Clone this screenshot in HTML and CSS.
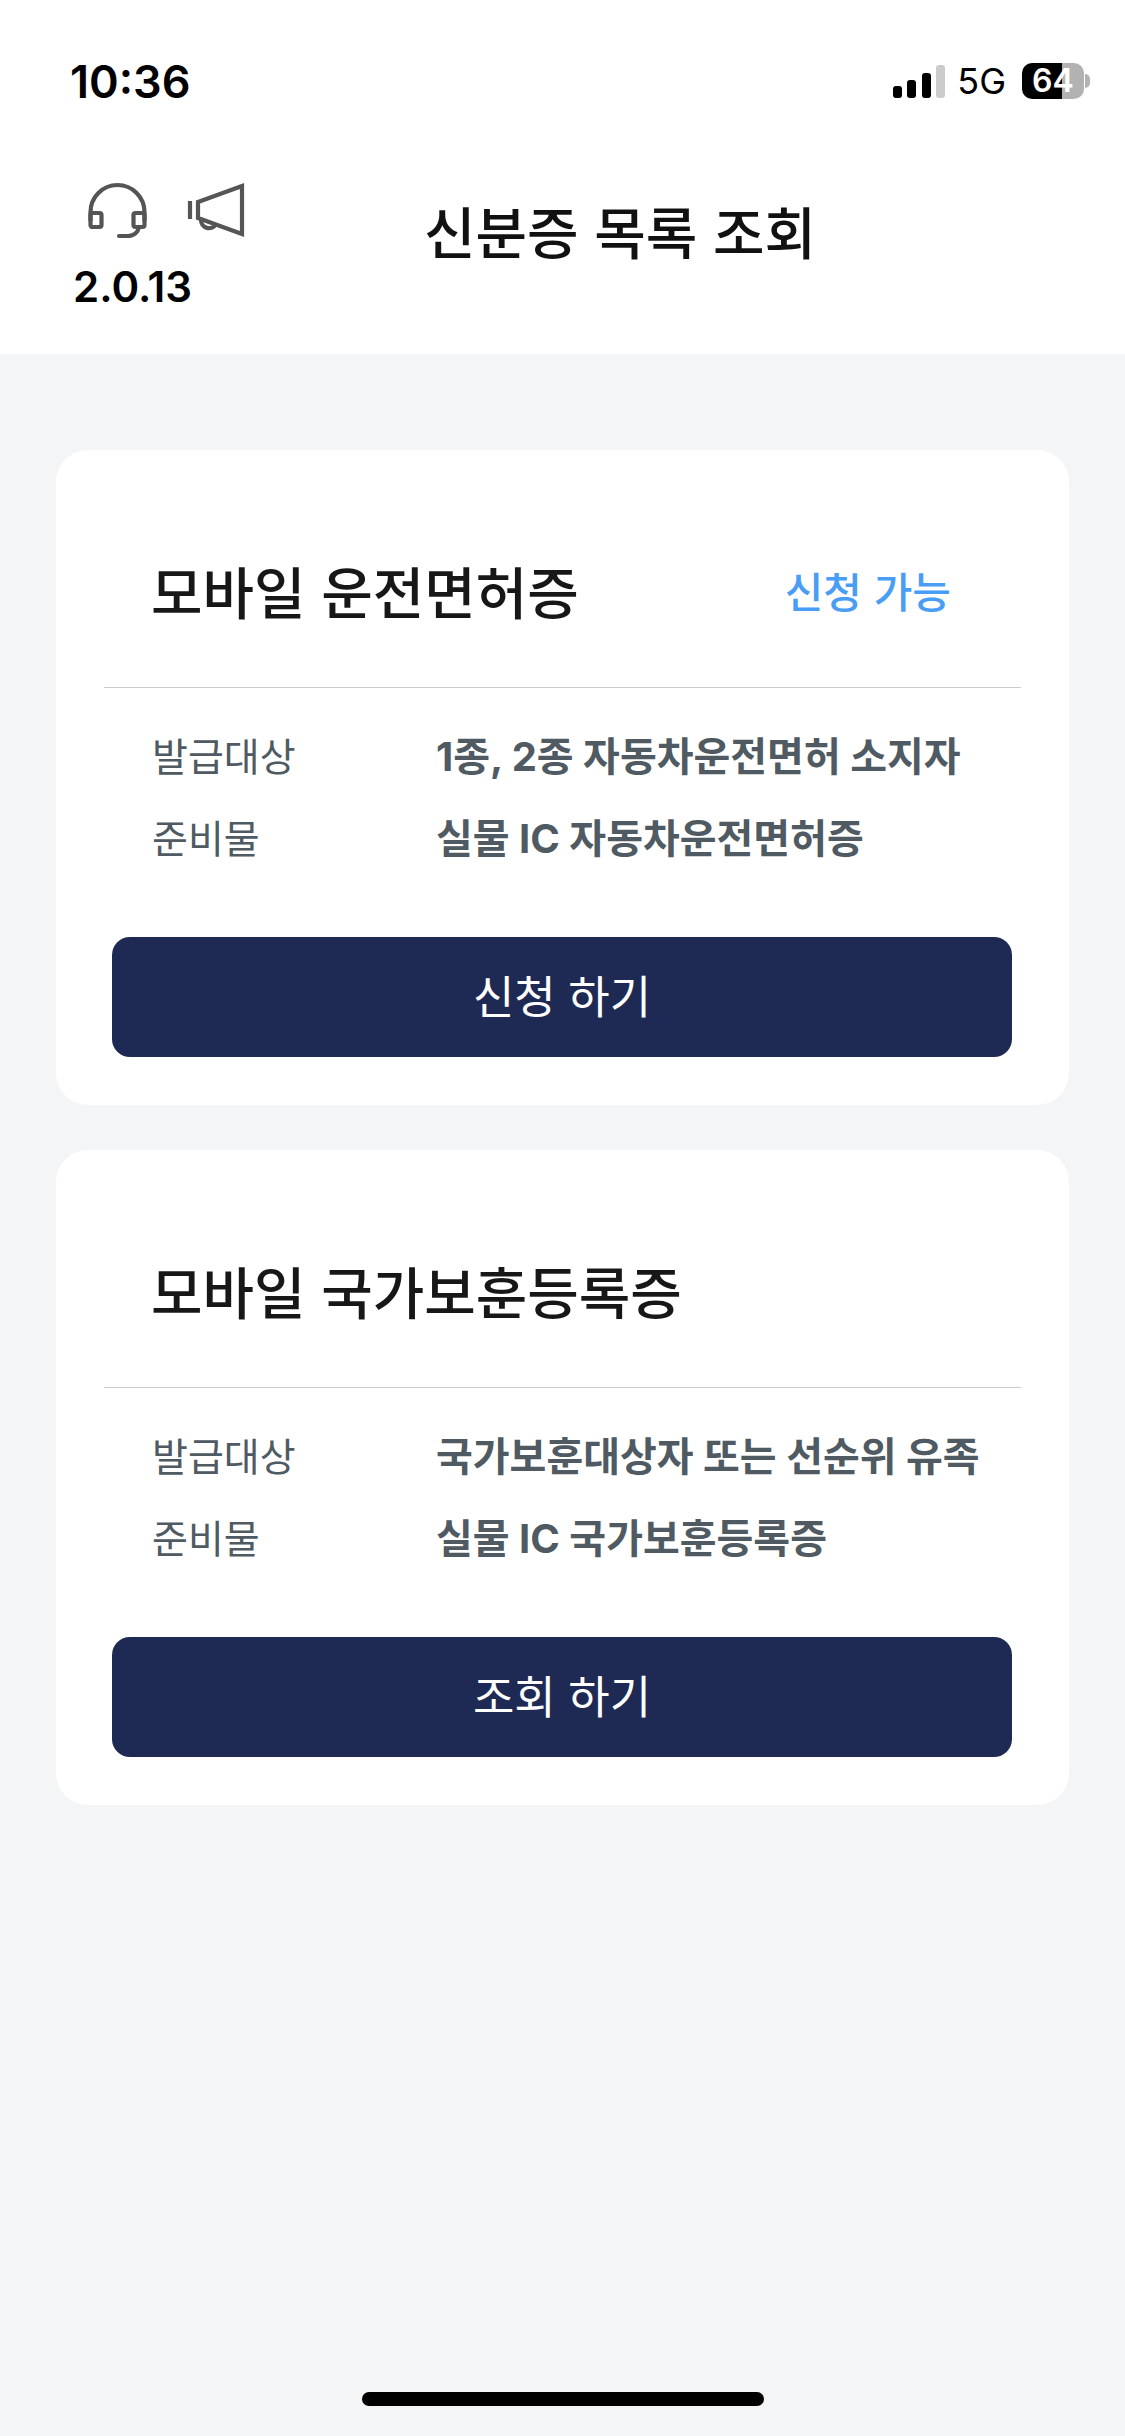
FILE: index.html
```html
<!DOCTYPE html>
<html lang="ko">
<head>
  <meta charset="utf-8">
  <title>신분증 목록 조회</title>
  <link rel="stylesheet" href="styles.css">
</head>
<body>
  <div class="top">
    <div class="status-bar">
      <span class="time">10:36</span>
      <div class="status-right">
        <svg class="signal" width="52" height="33" viewBox="0 0 52 33">
          <rect x="0" y="21" width="9" height="12" rx="3" fill="#000"/>
          <rect x="14" y="15" width="9" height="18" rx="3" fill="#000"/>
          <rect x="29" y="8" width="9" height="25" rx="3" fill="#000"/>
          <rect x="43" y="0" width="9" height="33" rx="3" fill="#ccc"/>
        </svg>
        <span class="network">5G</span>
        <div class="battery"><span class="battery-level">64</span><i class="battery-cap"></i></div>
      </div>
    </div>
    <div class="header">
      <div class="header-left">
        <div class="header-icons">
          <svg width="60" height="58" viewBox="0 0 60 58" fill="none" stroke="#555" stroke-width="4.2">
            <path d="M2.5 40V31a27 27 0 0 1 54 0v9"/>
            <rect x="2.5" y="32" width="11" height="14" rx="2"/>
            <rect x="45.5" y="32" width="11" height="14" rx="2"/>
            <path d="M51 46c-1 5-5 9-11 9h-9" stroke-linecap="round"/>
          </svg>
          <svg width="60" height="56" viewBox="0 0 60 56" fill="none" stroke="#555" stroke-width="4.2">
            <path d="M3 20v18"/>
            <path d="M11 21L55 5v48L11 37z"/>
            <path d="M14 39a8 8 0 0 0 15 4"/>
          </svg>
        </div>
        <span class="version">2.0.13</span>
      </div>
      <h1 class="page-title">신분증 목록 조회</h1>
    </div>
  </div>

  <div class="content">
    <div class="card">
      <div class="card-head">
        <h2 class="card-title">모바일 운전면허증</h2>
        <span class="card-state">신청 가능</span>
      </div>
      <dl class="info">
        <div class="info-row"><dt>발급대상</dt><dd>1종, 2종 자동차운전면허 소지자</dd></div>
        <div class="info-row"><dt>준비물</dt><dd>실물 IC 자동차운전면허증</dd></div>
      </dl>
      <button class="action">신청 하기</button>
    </div>

    <div class="card">
      <div class="card-head">
        <h2 class="card-title">모바일 국가보훈등록증</h2>
      </div>
      <dl class="info">
        <div class="info-row"><dt>발급대상</dt><dd>국가보훈대상자 또는 선순위 유족</dd></div>
        <div class="info-row"><dt>준비물</dt><dd>실물 IC 국가보훈등록증</dd></div>
      </dl>
      <button class="action">조회 하기</button>
    </div>
  </div>

  <div class="home-bar"><div class="home-indicator"></div></div>
</body>
</html>
```

FILE: styles.css
```css
* {
  box-sizing: border-box;
}

html, body {
  margin: 0;
  padding: 0;
}

body {
  width: 1125px;
  height: 2436px;
  display: flex;
  flex-direction: column;
  background-color: #f4f5f7;
  font-family: "Inter", "Noto Sans CJK KR", sans-serif;
}

.top {
  height: 354px;
  background-color: #fff;
}

.status-bar {
  height: 162px;
  display: flex;
  justify-content: space-between;
  align-items: center;
  padding: 0 35px 0 70px;
}

.time {
  font-size: 45px;
  font-weight: 600;
  color: #000;
}

.status-right {
  display: flex;
  align-items: center;
}

.network {
  font-size: 36px;
  margin-left: 12px;
  color: #000;
}

.battery {
  display: flex;
  align-items: center;
  margin-left: 16px;
}

.battery-level {
  width: 62px;
  height: 36px;
  border-radius: 10px;
  background: linear-gradient(to right, #000 64%, #b2b2b2 64%);
  color: #fff;
  font-size: 32px;
  font-weight: 600;
  line-height: 36px;
  text-align: center;
}

.battery-cap {
  width: 5px;
  height: 14px;
  margin-left: 1px;
  border-radius: 0 5px 5px 0;
  background-color: #b2b2b2;
}

.header {
  display: flex;
  align-items: flex-start;
  padding-left: 73px;
}

.header-left {
  width: 351px;
  margin-top: 19px;
}

.header-icons {
  display: flex;
  gap: 39px;
  padding-left: 15px;
}

.version {
  display: block;
  margin-top: 23px;
  font-size: 42px;
  font-weight: 600;
  color: #000;
  line-height: 50px;
}

.page-title {
  margin: 27px 0 0;
  font-family: "Noto Sans CJK KR", sans-serif;
  font-size: 56px;
  font-weight: 500;
  color: #111;
}

.content {
  flex: 1;
  display: flex;
  flex-direction: column;
  gap: 45px;
  padding: 96px 56px 0;
}

.card {
  height: 655px;
  padding: 0 48px;
  background-color: #fff;
  border-radius: 32px;
}

.card-head {
  height: 238px;
  display: flex;
  justify-content: space-between;
  align-items: center;
  padding: 42px 70px 0 47px;
  border-bottom: 1px solid #ccc;
}

.card-title {
  margin: 0;
  font-family: "Noto Sans CJK KR", sans-serif;
  font-size: 56px;
  font-weight: 500;
  color: #171717;
}

.card-state {
  font-family: "Noto Sans CJK KR", sans-serif;
  font-size: 42px;
  font-weight: 500;
  color: #4a9df5;
}

.info {
  margin: 0;
  padding: 25px 0 0 48px;
}

.info-row {
  height: 82px;
  display: flex;
  align-items: center;
  color: #4f5a62;
}

.info-row dt {
  width: 284px;
  font-size: 39px;
  font-weight: 400;
}

.info-row dd {
  margin: 0;
  font-size: 40px;
  font-weight: 700;
  white-space: nowrap;
}

.action {
  display: block;
  width: 900px;
  height: 120px;
  margin: 60px 0 0 8px;
  padding: 0 0 6px;
  border: 0;
  border-radius: 18px;
  background-color: #1e2a54;
  color: #fff;
  font-family: "Noto Sans CJK KR", sans-serif;
  font-size: 45px;
  font-weight: 400;
}

.home-bar {
  display: flex;
  justify-content: center;
  padding-bottom: 30px;
}

.home-indicator {
  width: 402px;
  height: 14px;
  border-radius: 7px;
  background-color: #000;
}
```
